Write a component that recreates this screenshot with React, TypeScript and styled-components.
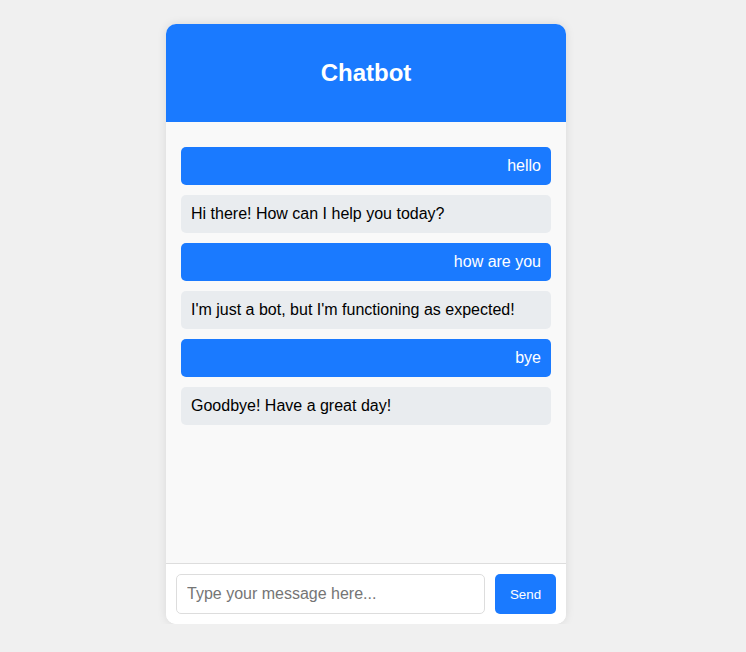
import React, { useState } from 'react';
import styled, { createGlobalStyle } from 'styled-components';

const GlobalStyle = createGlobalStyle`
  body {
    margin: 0;
    background-color: #f0f0f0;
    font-family: "Liberation Sans", Arial, sans-serif;
  }
`;

const Page = styled.div`
  display: flex;
  justify-content: center;
  padding: 24px 14px 0 0;
`;

const ChatContainer = styled.div`
  width: 400px;
  height: 600px;
  background-color: #fff;
  border-radius: 10px;
  overflow: hidden;
  box-shadow: 0 0 10px rgba(0, 0, 0, 0.1);
  display: flex;
  flex-direction: column;
`;

const Header = styled.div`
  height: 98px;
  background-color: #1a7aff;
  color: #fff;
  display: flex;
  align-items: center;
  justify-content: center;
`;

const Title = styled.h2`
  margin: 0;
  font-size: 24px;
  font-weight: bold;
`;

const Messages = styled.div`
  flex: 1;
  background-color: #f9f9f9;
  padding: 25px 15px;
  display: flex;
  flex-direction: column;
  gap: 10px;
  overflow-y: auto;
`;

const Bubble = styled.div<{ $user: boolean }>`
  padding: 10px;
  border-radius: 5px;
  font-size: 16px;
  line-height: 18px;
  background-color: ${(p) => (p.$user ? '#1a7aff' : '#e9ecef')};
  color: ${(p) => (p.$user ? '#fff' : '#000')};
  text-align: ${(p) => (p.$user ? 'right' : 'left')};
`;

const InputRow = styled.form`
  display: flex;
  gap: 10px;
  padding: 10px;
  border-top: 1px solid #ddd;
  background-color: #fff;
`;

const Input = styled.input`
  flex: 1;
  height: 40px;
  box-sizing: border-box;
  padding: 10px;
  font-size: 16px;
  font-family: "Liberation Sans", Arial, sans-serif;
  border: 1px solid #ddd;
  border-radius: 5px;
  outline: none;

  &::placeholder {
    color: #757575;
  }
`;

const SendButton = styled.button`
  width: 61px;
  height: 40px;
  background-color: #1a7aff;
  color: #fff;
  border: none;
  border-radius: 5px;
  font-size: 13.33px;
  font-family: "Liberation Sans", Arial, sans-serif;
  cursor: pointer;
`;

interface Message {
  text: string;
  user: boolean;
}

const initial: Message[] = [
  { text: 'hello', user: true },
  { text: 'Hi there! How can I help you today?', user: false },
  { text: 'how are you', user: true },
  { text: "I'm just a bot, but I'm functioning as expected!", user: false },
  { text: 'bye', user: true },
  { text: 'Goodbye! Have a great day!', user: false },
];

const App: React.FC = () => {
  const [messages, setMessages] = useState<Message[]>(initial);
  const [input, setInput] = useState('');

  const send = (e: React.FormEvent) => {
    e.preventDefault();
    if (!input.trim()) return;
    setMessages([...messages, { text: input, user: true }]);
    setInput('');
  };

  return (
    <>
      <GlobalStyle />
      <Page>
        <ChatContainer>
          <Header>
            <Title>Chatbot</Title>
          </Header>
          <Messages>
            {messages.map((m, i) => (
              <Bubble key={i} $user={m.user}>
                {m.text}
              </Bubble>
            ))}
          </Messages>
          <InputRow onSubmit={send}>
            <Input
              value={input}
              onChange={(e) => setInput(e.target.value)}
              placeholder="Type your message here..."
            />
            <SendButton type="submit">Send</SendButton>
          </InputRow>
        </ChatContainer>
      </Page>
    </>
  );
};

export default App;
